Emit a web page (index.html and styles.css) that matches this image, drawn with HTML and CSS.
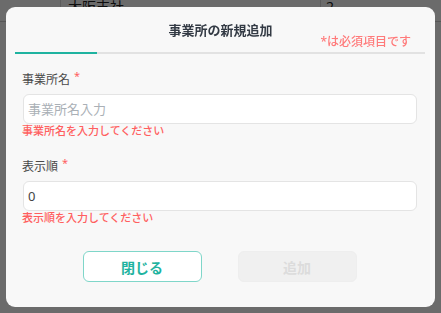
FILE: index.html
```html
<!DOCTYPE html>
<html lang="ja">
<head>
  <meta charset="UTF-8" />
  <meta name="viewport" content="width=device-width, initial-scale=1.0">
  <title>事業所の新規追加</title>
  <link rel="stylesheet" href="styles.css">
</head>
<body>
  <!-- Table behind the modal -->
  <div class="page">
    <div class="table-row">
      <div class="cell cell-name">大阪支社</div>
      <div class="cell cell-order">2</div>
    </div>
  </div>

  <!-- Modal -->
  <div class="overlay">
    <div class="modal">
      <header class="modal-header">
        <h1 class="modal-title">事業所の新規追加</h1>
        <div class="required-note">*は必須項目です</div>
      </header>
      <div class="tab-bar">
        <div class="tab-active"></div>
      </div>

      <form class="modal-body">
        <div class="field">
          <label class="field-label">事業所名<span class="required">*</span></label>
          <input class="field-input" type="text" placeholder="事業所名入力">
          <div class="field-error">事業所名を入力してください</div>
        </div>
        <div class="field">
          <label class="field-label">表示順<span class="required">*</span></label>
          <input class="field-input" type="text" value="0">
          <div class="field-error">表示順を入力してください</div>
        </div>

        <div class="modal-buttons">
          <button type="button" class="btn btn-close">閉じる</button>
          <button type="button" class="btn btn-submit" disabled>追加</button>
        </div>
      </form>
    </div>
  </div>
</body>
</html>
```

FILE: styles.css
```css
:root {
  --teal: #1fb3a0;
  --teal-light: #7fd6c9;
  --error: #ff5f5f;
  --text-color: #333a44;
  --label-color: #4a4a4a;
  --modal-bg: #f8f8f8;
  --border-color: #e4e4e4;
}

* {
  box-sizing: border-box;
  margin: 0;
  padding: 0;
}

body {
  font-family: 'Noto Sans', 'Noto Sans CJK JP', sans-serif;
  background-color: #ffffff;
  width: 441px;
  height: 313px;
  overflow: hidden;
}

/* Background table */
.page {
  margin-top: -9px;
}

.table-row {
  display: flex;
  height: 31px;
  border-bottom: 1px solid #d0d0d0;
  font-size: 14px;
  color: #222;
}

.cell {
  display: flex;
  align-items: center;
  border-left: 1px solid #d8d8d8;
  padding-left: 7px;
}

.cell-name {
  margin-left: 60px;
  width: 260px;
}

.cell-order {
  flex: 1;
  padding-left: 5px;
}

/* Modal */
.overlay {
  position: fixed;
  inset: 0;
  background-color: rgba(0, 0, 0, 0.58);
  display: flex;
  align-items: flex-start;
  justify-content: center;
  padding-top: 7px;
}

.modal {
  width: 429px;
  height: 300px;
  background-color: var(--modal-bg);
  border-radius: 9px;
  padding: 0 9px;
  display: flex;
  flex-direction: column;
}

.modal-header {
  position: relative;
  height: 45px;
  display: flex;
  justify-content: center;
  padding-top: 14px;
}

.modal-title {
  font-size: 13px;
  font-weight: 700;
  color: var(--text-color);
  line-height: 18px;
}

.required-note {
  position: absolute;
  right: 15px;
  top: 27px;
  font-size: 12px;
  line-height: 16px;
  color: #ff7a7a;
  font-weight: 500;
}

.tab-bar {
  height: 2px;
  margin: 0 1px 0 0;
  background-color: #e2e2e2;
}

.tab-active {
  width: 82px;
  height: 2px;
  background-color: var(--teal);
}

.modal-body {
  display: flex;
  flex-direction: column;
  padding: 18px 8px 0 7px;
  flex: 1;
}

.field {
  display: flex;
  flex-direction: column;
  margin-bottom: 21px;
}

.field-label {
  display: block;
  height: 16px;
  font-size: 12px;
  line-height: 16px;
  color: var(--label-color);
  margin-bottom: 6px;
}

.required {
  position: relative;
  top: -4px;
  color: var(--error);
  font-size: 11px;
  line-height: 0;
  margin-left: 4px;
}

.field-input {
  height: 30px;
  width: 394px;
  margin-left: 1px;
  border: 1px solid var(--border-color);
  border-radius: 6px;
  background-color: #ffffff;
  padding: 0 4px;
  font-family: 'Noto Sans', 'Noto Sans CJK JP', sans-serif;
  font-size: 13px;
  color: #444;
  outline: none;
}

.field-input::placeholder {
  color: #aab0b6;
}

.field-error {
  height: 14px;
  font-size: 11px;
  line-height: 14px;
  color: var(--error);
  font-weight: 500;
}

.modal-buttons {
  display: flex;
  gap: 36px;
  justify-content: center;
  margin-top: 5px;
  padding-right: 1px;
}

.btn {
  width: 119px;
  height: 31px;
  border-radius: 6px;
  font-family: 'Noto Sans', 'Noto Sans CJK JP', sans-serif;
  font-size: 14px;
  font-weight: 700;
  cursor: pointer;
}

.btn-close {
  background-color: #ffffff;
  color: var(--teal);
  border: 1px solid var(--teal-light);
}

.btn-submit {
  background-color: #f0f0f0;
  color: #dcdcdc;
  border: 1px solid #eeeeee;
  cursor: not-allowed;
}
```
